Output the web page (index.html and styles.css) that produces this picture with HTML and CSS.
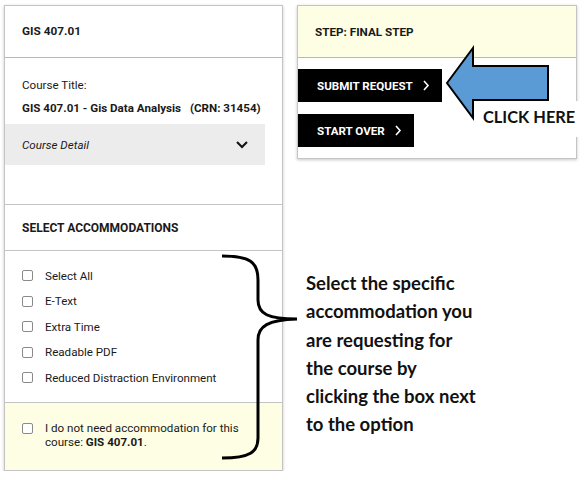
FILE: index.html
```html
<!DOCTYPE html>
<html lang="en">
<head>
  <meta charset="UTF-8" />
  <title>Accommodation Request</title>
  <link rel="stylesheet" href="styles.css">
</head>
<body>
  <div class="page">
    <div class="card course-card">
      <div class="card-head">GIS 407.01</div>
      <div class="course-body">
        <p class="label">Course Title:</p>
        <p class="course-title">GIS 407.01 - Gis Data Analysis <span class="crn">(CRN: 31454)</span></p>
        <div class="detail">
          <span>Course Detail</span>
          <svg width="14" height="10" viewBox="0 0 14 10"><polyline points="2,2 7,7 12,2" fill="none" stroke="#111" stroke-width="2"/></svg>
        </div>
      </div>
      <div class="section-head">SELECT ACCOMMODATIONS</div>
      <ul class="options">
        <li><span class="box"></span>Select All</li>
        <li><span class="box"></span>E-Text</li>
        <li><span class="box"></span>Extra Time</li>
        <li><span class="box"></span>Readable PDF</li>
        <li><span class="box"></span>Reduced Distraction Environment</li>
      </ul>
      <div class="no-need">
        <span class="box"></span>
        <p>I do not need accommodation for this course: <b>GIS 407.01</b>.</p>
      </div>
    </div>

    <div class="side">
      <div class="card step-card">
        <div class="step-head">STEP: FINAL STEP</div>
        <div class="actions">
          <button class="btn">SUBMIT REQUEST <svg width="8" height="11" viewBox="0 0 8 11"><polyline points="2,1 6,5.5 2,10" fill="none" stroke="#fff" stroke-width="1.6"/></svg></button>
          <button class="btn">START OVER <svg width="8" height="11" viewBox="0 0 8 11"><polyline points="2,1 6,5.5 2,10" fill="none" stroke="#fff" stroke-width="1.6"/></svg></button>
        </div>
      </div>
      <p class="note">Select the specific<br>accommodation you<br>are requesting for<br>the course by<br>clicking the box next<br>to the option</p>
    </div>

    <!-- annotations over the screenshot -->
    <svg class="arrow" width="120" height="80" viewBox="440 44 120 80">
      <polygon points="447,83 473,48 473,66 548,66 548,100 473,100 473,118" fill="#5b9bd5" stroke="#000" stroke-width="2" stroke-linejoin="miter"/>
    </svg>
    <div class="click-here">CLICK HERE</div>
    <svg class="brace" width="90" height="215" viewBox="215 250 90 215">
      <path d="M222,256 C250,256 258,262 258,280 L258,300 C258,314 268,319 297,319 C268,320 258,326 258,340 L258,438 C258,452 250,458 222,458" fill="none" stroke="#000" stroke-width="3"/>
    </svg>
  </div>
</body>
</html>
```

FILE: styles.css
```css
* { box-sizing: border-box; }
body {
  margin: 0;
  background: #ffffff;
  color: #1a1a1a;
  font-family: Roboto, 'Liberation Sans', sans-serif;
  font-size: 11.6px;
}
p { margin: 0; }
.page {
  position: relative;
  display: flex;
  align-items: flex-start;
  gap: 14px;
  padding: 5px 0 0 4px;
}
.card {
  background: #fff;
  border: 1px solid #c4c4c4;
  box-shadow: 0 1px 3px rgba(0,0,0,0.22);
}
.course-card { width: 279px; }
.card-head {
  height: 52px;
  padding: 18px 17px 0;
  font-weight: bold;
  font-size: 11.8px;
  border-bottom: 1px solid #b8b8b8;
}
.course-body {
  height: 147px;
  padding-top: 19px;
  border-bottom: 1px solid #c4c4c4;
}
.label, .course-title { padding: 0 17px; line-height: 16px; }
.course-title {
  margin-top: 7px;
  font-weight: bold;
  white-space: nowrap;
}
.crn { margin-left: 6px; }
.detail {
  margin: 8px 17px 0 0;
  height: 41px;
  background: #ececec;
  display: flex;
  align-items: center;
  justify-content: space-between;
  padding: 0 16px 0 17px;
  font-style: italic;
}
.section-head {
  height: 46px;
  padding: 16px 17px 0;
  font-weight: bold;
  font-size: 12px;
  border-bottom: 1px solid #c4c4c4;
}
.options {
  list-style: none;
  margin: 0;
  padding: 12px 17px 12px;
  height: 152px;
  border-bottom: 1px solid #c4c4c4;
}
.options li {
  display: flex;
  align-items: center;
  height: 25.5px;
}
.box {
  flex: none;
  width: 11px;
  height: 11px;
  border: 1px solid #8a8a8a;
  border-radius: 2px;
  background: #fff;
  margin-right: 12px;
}
.no-need {
  height: 67px;
  background: #fefee4;
  display: flex;
  align-items: flex-start;
  padding: 18px 17px 0;
}
.no-need .box { margin-top: 2px; }
.no-need p { line-height: 14px; width: 205px; }

.side { width: 280px; }
.step-head {
  height: 52px;
  background: #fefee4;
  padding: 19px 17px 0;
  font-weight: bold;
  font-size: 11.7px;
  border-bottom: 1px solid #b8b8b8;
}
.actions {
  display: flex;
  flex-direction: column;
  align-items: flex-start;
  gap: 12px;
  padding: 11px 0 11px;
}
.btn {
  display: flex;
  align-items: center;
  gap: 9px;
  height: 33px;
  padding: 0 12px 0 19px;
  border: none;
  background: #000;
  color: #fff;
  font-family: inherit;
  font-weight: bold;
  font-size: 11.6px;
}
.note {
  margin: 110px 0 0 9px;
  font-family: Lato, 'Open Sans', sans-serif;
  font-weight: bold;
  font-size: 18.5px;
  line-height: 28.3px;
  color: #111;
}
.arrow {
  position: absolute;
  left: 440px;
  top: 44px;
}
.click-here {
  position: absolute;
  left: 476px;
  top: 101px;
  width: 106px;
  height: 36px;
  background: #fff;
  padding: 6px 0 0 7px;
  font-family: Lato, 'Open Sans', sans-serif;
  font-weight: bold;
  font-size: 16.4px;
  color: #111;
}
.brace {
  position: absolute;
  left: 215px;
  top: 250px;
}
```
